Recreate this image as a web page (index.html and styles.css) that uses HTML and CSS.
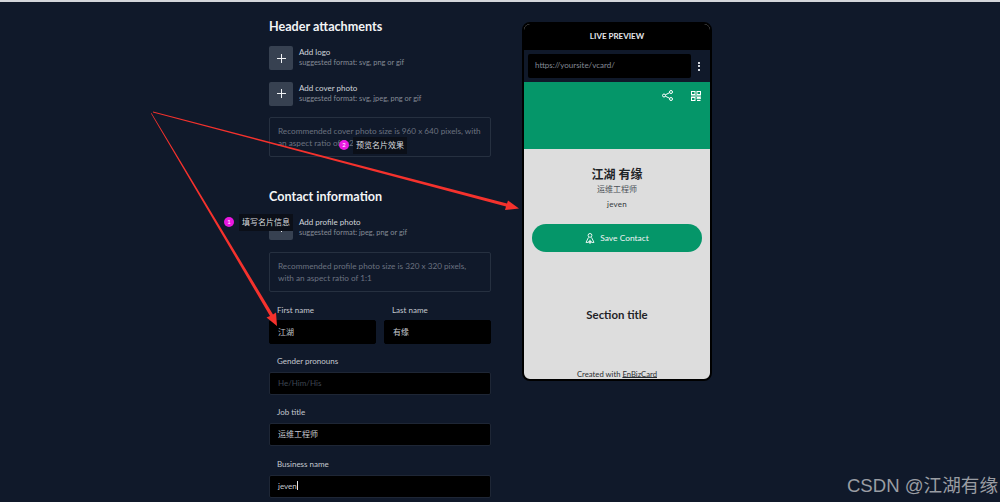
FILE: index.html
```html
<!DOCTYPE html>
<html lang="en">
<head>
    <meta charset="UTF-8">
    <meta name="viewport" content="width=device-width, initial-scale=1.0">
    <title>Create vCard</title>
    <link rel="stylesheet" href="styles.css">
</head>
<body>
    <div class="page">
        <div class="form-col">
            <h2 class="section-title">Header attachments</h2>
            <div class="add-row">
                <div class="add-btn"><svg viewBox="0 0 10 10" stroke="#f3f4f6" stroke-width="1.1"><path d="M5 0v10M0 5h10"/></svg></div>
                <div>
                    <div class="add-name">Add logo</div>
                    <div class="add-hint">suggested format: svg, png or gif</div>
                </div>
            </div>
            <div class="add-row">
                <div class="add-btn"><svg viewBox="0 0 10 10" stroke="#f3f4f6" stroke-width="1.1"><path d="M5 0v10M0 5h10"/></svg></div>
                <div>
                    <div class="add-name">Add cover photo</div>
                    <div class="add-hint">suggested format: svg, jpeg, png or gif</div>
                </div>
            </div>
            <div class="note">Recommended cover photo size is 960 x 640 pixels, with an aspect ratio of 3:2</div>

            <h2 class="section-title contact-title">Contact information</h2>
            <div class="add-row">
                <div class="add-btn"><svg viewBox="0 0 10 10" stroke="#f3f4f6" stroke-width="1.1"><path d="M5 0v10M0 5h10"/></svg></div>
                <div>
                    <div class="add-name">Add profile photo</div>
                    <div class="add-hint">suggested format: jpeg, png or gif</div>
                </div>
            </div>
            <div class="note">Recommended profile photo size is 320 x 320 pixels, with an aspect ratio of 1:1</div>

            <div class="name-row">
                <div class="field">
                    <label>First name</label>
                    <div class="input tall">江湖</div>
                </div>
                <div class="field">
                    <label>Last name</label>
                    <div class="input tall">有缘</div>
                </div>
            </div>
            <div class="field">
                <label>Gender pronouns</label>
                <div class="input placeholder">He/Him/His</div>
            </div>
            <div class="field">
                <label>Job title</label>
                <div class="input">运维工程师</div>
            </div>
            <div class="field">
                <label>Business name</label>
                <div class="input">jeven<span class="caret"></span></div>
            </div>
        </div>

        <div class="phone">
            <div class="phone-head">LIVE PREVIEW</div>
            <div class="url-bar">
                <div class="url-input">https://yoursite/vcard/</div>
                <div class="dots"><i></i><i></i><i></i></div>
            </div>
            <div class="cover">
                <svg class="share-icon" viewBox="0 0 11 11" fill="none" stroke="#fff" stroke-width="1">
                    <circle cx="2" cy="5.5" r="1.5"/>
                    <circle cx="9" cy="2" r="1.5"/>
                    <circle cx="9" cy="9" r="1.5"/>
                    <path d="M3.4 4.8 7.6 2.7M3.4 6.2 7.6 8.3"/>
                </svg>
                <svg class="qr-icon" viewBox="0 0 10 10" fill="none" stroke="#fff" stroke-width="1">
                    <rect x="0.5" y="0.5" width="3.5" height="3"/>
                    <rect x="6" y="0.5" width="3.5" height="3"/>
                    <rect x="0.5" y="6.5" width="3.5" height="3"/>
                    <path d="M0 5h10M6 6.5h3.5v1.2H6zM6 9.5h3.5"/>
                </svg>
            </div>
            <div class="card">
                <div class="card-name">江湖 有缘</div>
                <div class="card-job">运维工程师</div>
                <div class="card-biz">jeven</div>
                <div class="save-btn">
                    <svg class="save-icon" viewBox="0 0 10 11" fill="none" stroke="#fff" stroke-width="0.9">
                        <circle cx="5" cy="2.4" r="1.9"/>
                        <path d="M3.5 4.4 1 9.4H3.4M6.5 4.4 9 9.4H6.6"/>
                        <path d="M5 6.8v4M3.2 8.8h3.6" stroke-width="1.2"/>
                    </svg>
                    Save Contact
                </div>
                <div class="card-section">Section title</div>
                <div class="card-foot">Created with <u>EnBizCard</u></div>
            </div>
        </div>
    </div>

    <svg class="arrows" viewBox="0 0 1000 502" fill="#f5322d">
        <path d="M153 111.6 507 203.5 508 200.5 519 208.500 505 210 506 206.500 153 112.400z"/>
        <path d="M151.500 113 273 314.500 276 312.500 277 326 266.500 317.500 270 316 151 113.500z"/>
    </svg>

    <div class="tip tip-one"><span class="tip-num">1</span><span class="tip-text">填写名片信息</span></div>
    <div class="tip tip-two"><span class="tip-num">2</span><span class="tip-text">预览名片效果</span></div>

    <div class="watermark">CSDN @江湖有缘</div>
</body>
</html>
```

FILE: styles.css
```css
* {
    box-sizing: border-box;
}
html, body {
    margin: 0;
    height: 502px;
    overflow: hidden;
}
body {
    position: relative;
    width: 1000px;
    background-color: #10192a;
    border-top: 2px solid #d4d6da;
    font-family: Lato, "Noto Sans CJK SC", sans-serif;
    color: #e5e7eb;
}
.page {
    display: flex;
    align-items: flex-start;
    gap: 31px;
    padding-left: 269px;
}
.form-col {
    width: 222px;
    flex-shrink: 0;
}
.section-title {
    margin: 0;
    padding-top: 17px;
    height: 44px;
    font-size: 12.6px;
    line-height: 16px;
    font-weight: 700;
    color: #f3f4f6;
}
.contact-title {
    padding-top: 0;
    margin-top: 31.6px;
    height: 27px;
}
.add-row {
    display: flex;
    align-items: center;
    gap: 6px;
    height: 24px;
    margin-bottom: 11.7px;
}
.add-btn {
    display: flex;
    align-items: center;
    justify-content: center;
    width: 24px;
    height: 24px;
    border-radius: 2px;
    background-color: #374151;
}
.add-btn svg {
    width: 9px;
    height: 9px;
}
.add-name {
    margin-top: -1px;
    font-size: 8px;
    line-height: 11px;
    font-weight: 400;
    color: #d1d5db;
}
.add-hint {
    font-size: 7.4px;
    line-height: 10px;
    color: #858b96;
}
.note {
    height: 40px;
    padding: 7px 8px;
    border: 1px solid #263040;
    border-radius: 2px;
    font-size: 8.2px;
    line-height: 12px;
    color: #6b7280;
}
.name-row {
    display: flex;
    gap: 8px;
}
.name-row .field {
    flex: 1;
}
.field label {
    display: block;
    padding: 12.5px 8px 0;
    height: 28.3px;
    font-size: 8px;
    line-height: 11px;
    color: #c4c8cf;
}
.name-row .field label {
    padding-top: 13.5px;
    height: 28px;
}
.input {
    height: 23px;
    padding: 0 8px;
    border: 1px solid #1e2635;
    border-radius: 2px;
    background-color: #000;
    font-size: 8px;
    line-height: 21px;
    color: #c4c8cf;
}
.input.tall {
    height: 24px;
    line-height: 22px;
    border-color: #000;
}
.input.placeholder {
    color: #3f4753;
}
.caret {
    display: inline-block;
    width: 1px;
    height: 9px;
    background-color: #e5e7eb;
    vertical-align: -1px;
}
.phone {
    width: 190px;
    height: 359px;
    margin-top: 20px;
    border: 2px solid #000;
    border-radius: 8px;
    background-color: #ddd;
    overflow: hidden;
    flex-shrink: 0;
}
.phone-head {
    height: 26px;
    background-color: #000;
    color: #e5e7eb;
    font-size: 8px;
    line-height: 25px;
    font-weight: 700;
    text-align: center;
}
.url-bar {
    display: flex;
    align-items: center;
    height: 32px;
    padding: 0 3px 0 4px;
    background-color: #10192a;
}
.url-input {
    flex: 1;
    height: 24px;
    padding-left: 7px;
    border-radius: 2px;
    background-color: #000;
    color: #858b96;
    font-size: 8px;
    line-height: 23px;
}
.dots {
    display: flex;
    flex-direction: column;
    gap: 1.5px;
    width: 16px;
    align-items: center;
}
.dots i {
    width: 2px;
    height: 2px;
    background-color: #d1d5db;
}
.cover {
    display: flex;
    justify-content: flex-end;
    align-items: flex-start;
    gap: 18px;
    height: 67px;
    padding: 8px 9px 0 0;
    background-color: #059669;
}
.share-icon {
    width: 11px;
    height: 11px;
}
.qr-icon {
    width: 10px;
    height: 10px;
    margin-top: 1px;
}
.card {
    position: relative;
    height: 230px;
    padding: 0 8px;
    text-align: center;
    color: #1f2327;
}
.card-name {
    padding-top: 18px;
    font-size: 12px;
    line-height: 15px;
    font-weight: 700;
}
.card-job {
    font-size: 8px;
    line-height: 12px;
    color: #4b5057;
    margin-top: 1px;
}
.card-biz {
    margin-top: 3px;
    font-size: 8px;
    line-height: 12px;
    letter-spacing: 0.2px;
    color: #33373c;
}
.save-btn {
    display: flex;
    align-items: center;
    justify-content: center;
    gap: 5px;
    width: 170px;
    height: 28px;
    margin-top: 14px;
    border-radius: 14px;
    background-color: #059669;
    color: #f3f4f6;
    font-size: 8.4px;
}
.save-icon {
    width: 10px;
    height: 11px;
}
.card-section {
    margin-top: 56px;
    font-size: 11.4px;
    line-height: 14px;
    font-weight: 700;
}
.card-foot {
    position: absolute;
    left: 0;
    right: 0;
    bottom: 0;
    font-size: 7.7px;
    line-height: 10px;
    color: #2b2f33;
}
.card-foot u {
    text-underline-offset: 0;
}
/* screenshot annotations on top of the page */
.arrows {
    position: absolute;
    left: 0;
    top: -2px;
    width: 1000px;
    height: 502px;
}
.tip {
    position: absolute;
    display: flex;
    align-items: center;
    gap: 5px;
}
.tip-one {
    left: 224px;
    top: 212px;
}
.tip-two {
    left: 339px;
    top: 135px;
}
.tip-num {
    width: 10px;
    height: 10px;
    margin-top: -1px;
    border-radius: 50%;
    background-color: #ea18e0;
    color: #fff;
    font-size: 6px;
    line-height: 10px;
    text-align: center;
}
.tip-text {
    padding: 0 3px;
    height: 17px;
    background-color: #0b0f18;
    color: #d8dade;
    font-size: 8px;
    line-height: 17px;
}
.tip-two .tip-text {
    margin-left: -1px;
}
.watermark {
    position: absolute;
    right: 2px;
    top: 472px;
    font-family: "Liberation Sans", "Noto Sans CJK SC", sans-serif;
    font-size: 18.6px;
    line-height: 24px;
    color: #9a9da3;
}
```
